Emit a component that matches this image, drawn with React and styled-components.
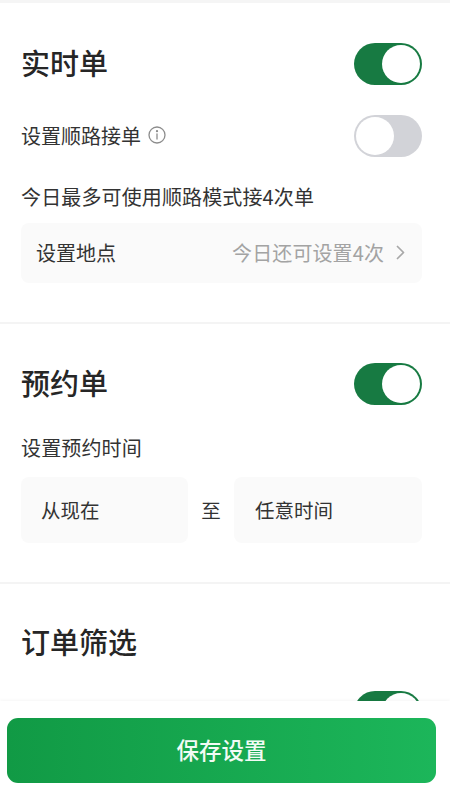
import React from "react";
import styled, { createGlobalStyle } from "styled-components";

const Global = createGlobalStyle`
  html, body { margin: 0; padding: 0; background: #fff; }
  body { font-family: "Noto Sans CJK SC", "Noto Sans", sans-serif; color: #2a2a2a; }
`;

const Page = styled.div`
  width: 450px;
  height: 800px;
  display: flex;
  flex-direction: column;
  overflow: hidden;
  background: #fff;
`;

const Scroll = styled.main`
  flex: 1;
  min-height: 0;
  overflow: hidden;
  border-top: 3px solid #f5f5f5;
`;

const Section = styled.section`
  padding: ${(p) => p.$top}px 28px 39px 21px;
  border-bottom: ${(p) => (p.$last ? "none" : "2px solid #f4f4f4")};
`;

const Row = styled.div`
  display: flex;
  align-items: center;
  justify-content: space-between;
  height: 42px;
  margin-top: ${(p) => p.$mt || 0}px;
`;

const Title = styled.h2`
  margin: 0;
  padding-bottom: 3px;
  font-size: 29px;
  line-height: 39px;
  font-weight: 500;
  color: #262626;
`;

const RowLabel = styled.div`
  display: flex;
  align-items: center;
  gap: 7px;
  padding-bottom: 2px;
  font-size: 20px;
  color: #333;
`;

const Hint = styled.p`
  margin: ${(p) => p.$mt}px 0 0;
  padding-bottom: 1px;
  font-size: 20px;
  line-height: 23px;
  letter-spacing: 0.13px;
  color: #333;
  white-space: nowrap;
`;

const Track = styled.div`
  width: 68px;
  height: 42px;
  box-sizing: border-box;
  padding: 2px;
  border-radius: 21px;
  display: flex;
  justify-content: ${(p) => (p.$on ? "flex-end" : "flex-start")};
  background: ${(p) => (p.$on ? "#177a42" : "#d2d3d8")};
`;

const Knob = styled.span`
  width: 38px;
  height: 38px;
  border-radius: 50%;
  background: #fff;
`;

const LocationCard = styled.div`
  margin: 14px 0 0;
  height: 60px;
  box-sizing: border-box;
  padding: 0 17px 2px 15px;
  display: flex;
  align-items: center;
  justify-content: space-between;
  background: #fafafa;
  border-radius: 8px;
  font-size: 20px;
  color: #333;
`;

const Muted = styled.span`
  display: flex;
  align-items: center;
  gap: 12px;
  letter-spacing: 0.1px;
  color: #a3a3a3;
`;

const TimeRow = styled.div`
  margin: 17px 0 0;
  display: grid;
  grid-template-columns: 167px 46px 188px;
  align-items: center;
`;

const TimeCard = styled.div`
  height: 66px;
  box-sizing: border-box;
  padding: 0 0 2px ${(p) => p.$pad}px;
  display: flex;
  align-items: center;
  background: #fafafa;
  border-radius: 8px;
  font-size: 19.5px;
  color: #333;
`;

const To = styled.span`
  padding-bottom: 2px;
  text-align: center;
  font-size: 19.5px;
  color: #333;
`;

const Footer = styled.footer`
  flex: none;
  height: 99px;
  box-sizing: border-box;
  padding: 17px 14px 0 7px;
  background: #fff;
  box-shadow: 0 -1px 3px rgba(0, 0, 0, 0.04);
  position: relative;
`;

const SaveButton = styled.button`
  display: block;
  width: 100%;
  height: 65px;
  padding: 0 0 4px;
  border: none;
  border-radius: 11px;
  background: linear-gradient(90deg, #119a45, #1cb65a);
  color: #f2fbf5;
  font: 500 22.5px "Noto Sans CJK SC", sans-serif;
`;

const InfoIcon = () => (
  <svg width="18" height="18" viewBox="0 0 18 18" fill="none" stroke="#8c8c8c" strokeWidth="1.3" strokeLinecap="round">
    <circle cx="9" cy="9" r="8" />
    <path d="M9 8v5" />
    <circle cx="9" cy="5.2" r="0.5" fill="#8c8c8c" />
  </svg>
);

const Chevron = () => (
  <svg width="9" height="15" viewBox="0 0 9 15" fill="none" stroke="#a8a8a8" strokeWidth="1.7" strokeLinecap="round" strokeLinejoin="round">
    <path d="M1.5 1.5l6 6-6 6" />
  </svg>
);

const Toggle = ({ on }) => (
  <Track $on={on}>
    <Knob />
  </Track>
);

export default function App() {
  return (
    <Page>
      <Global />
      <Scroll>
        <Section $top={40}>
          <Row>
            <Title>实时单</Title>
            <Toggle on />
          </Row>
          <Row $mt={30}>
            <RowLabel>
              设置顺路接单
              <InfoIcon />
            </RowLabel>
            <Toggle />
          </Row>
          <Hint $mt={28}>今日最多可使用顺路模式接4次单</Hint>
          <LocationCard>
            设置地点
            <Muted>
              今日还可设置4次
              <Chevron />
            </Muted>
          </LocationCard>
        </Section>
        <Section $top={39}>
          <Row>
            <Title>预约单</Title>
            <Toggle on />
          </Row>
          <Hint $mt={31}>设置预约时间</Hint>
          <TimeRow>
            <TimeCard $pad={20}>从现在</TimeCard>
            <To>至</To>
            <TimeCard $pad={21}>任意时间</TimeCard>
          </TimeRow>
        </Section>
        <Section $top={38} $last>
          <Row>
            <Title>订单筛选</Title>
          </Row>
          <Row $mt={27}>
            <span />
            <Toggle on />
          </Row>
        </Section>
      </Scroll>
      <Footer>
        <SaveButton>保存设置</SaveButton>
      </Footer>
    </Page>
  );
}
